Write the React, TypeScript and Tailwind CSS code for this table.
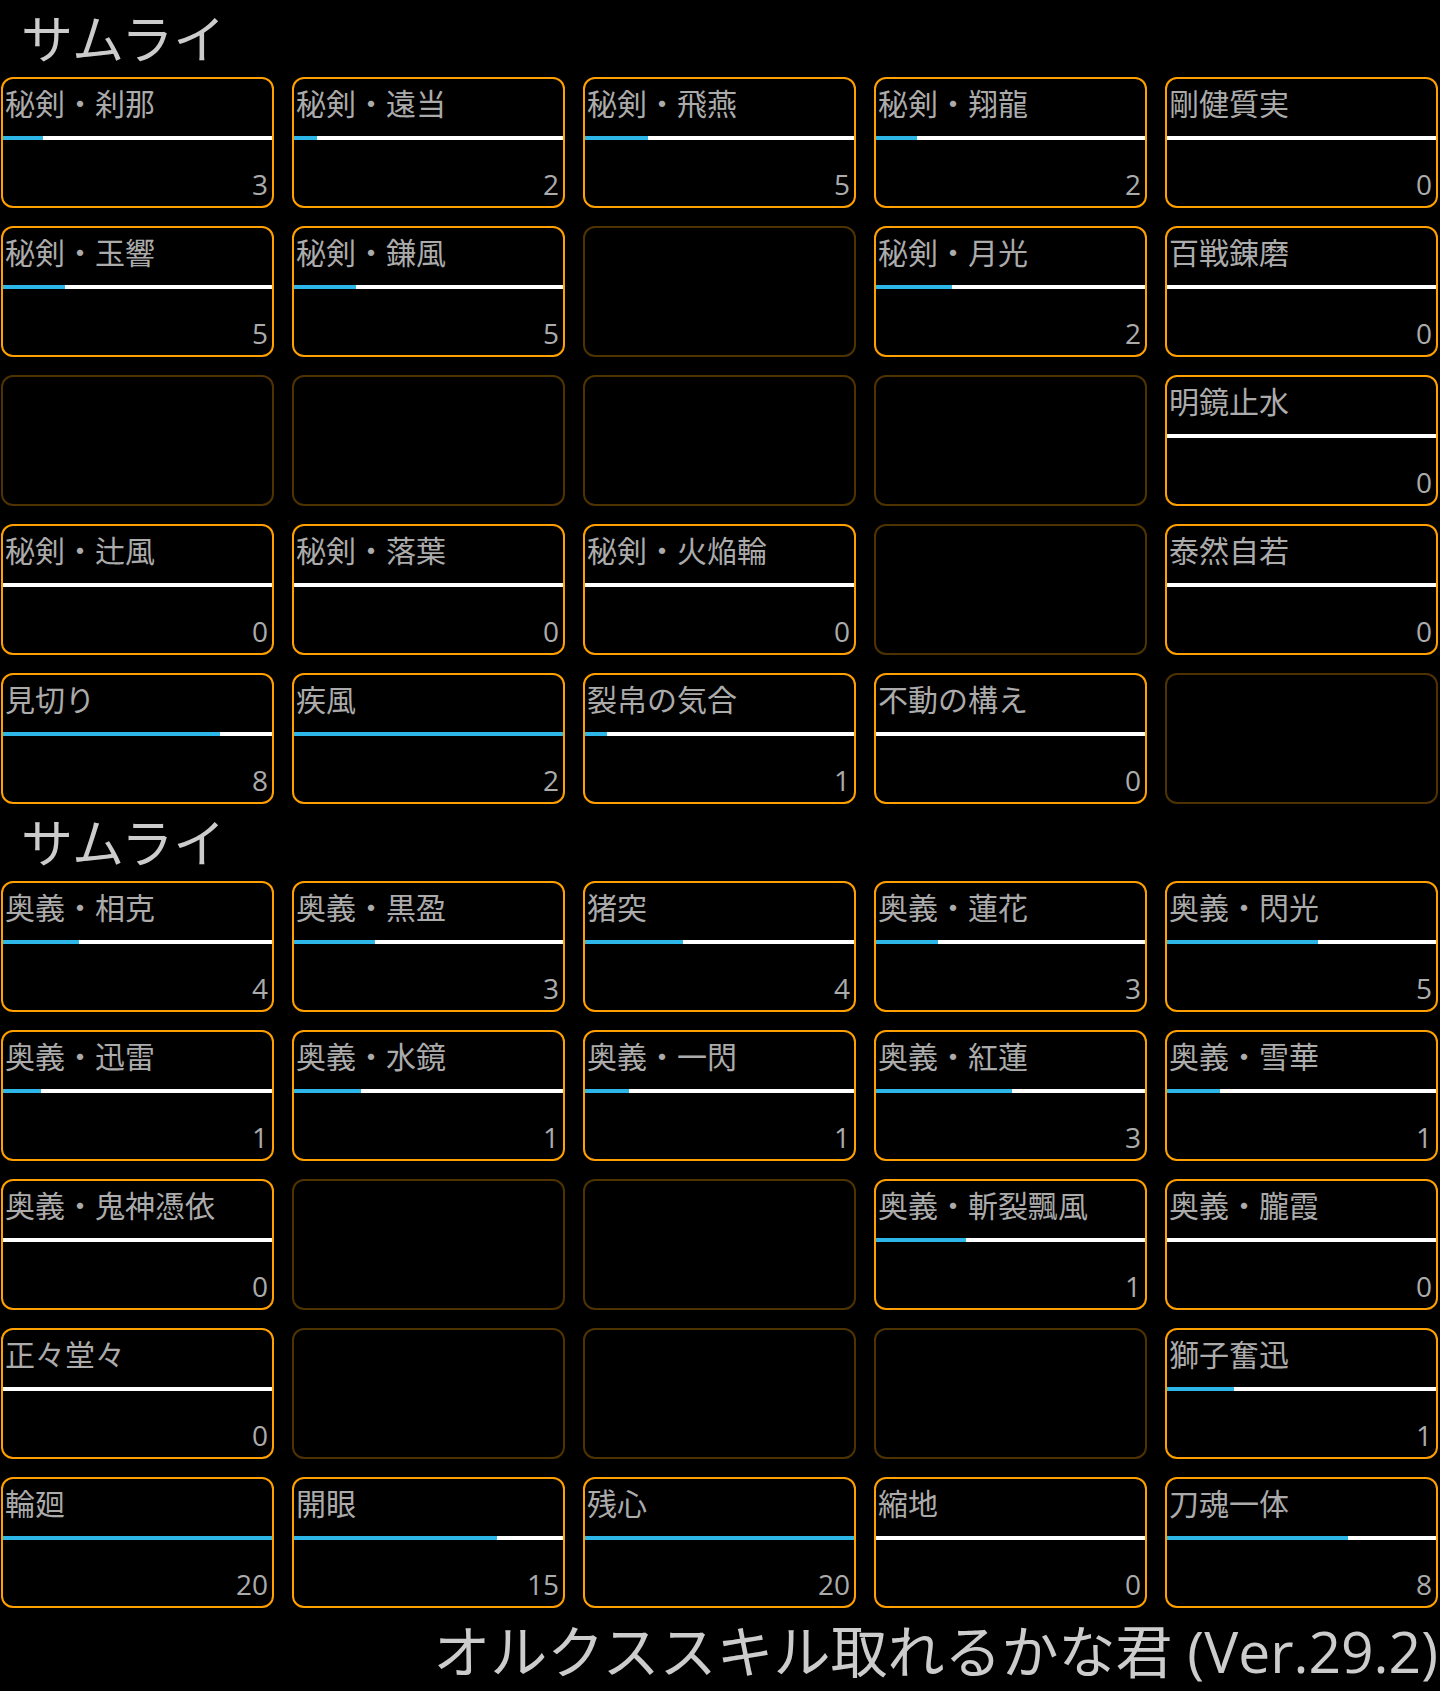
import React from "react";

type Skill = { name: string; value: number; fill: number } | null;

const font = { fontFamily: '"Open Sans", "Noto Sans CJK JP", sans-serif' };

const section1: Skill[] = [
  { name: "秘剣・刹那", value: 3, fill: 0.147 },
  { name: "秘剣・遠当", value: 2, fill: 0.084 },
  { name: "秘剣・飛燕", value: 5, fill: 0.236 },
  { name: "秘剣・翔龍", value: 2, fill: 0.152 },
  { name: "剛健質実", value: 0, fill: 0 },
  { name: "秘剣・玉響", value: 5, fill: 0.232 },
  { name: "秘剣・鎌風", value: 5, fill: 0.232 },
  null,
  { name: "秘剣・月光", value: 2, fill: 0.284 },
  { name: "百戦錬磨", value: 0, fill: 0 },
  null,
  null,
  null,
  null,
  { name: "明鏡止水", value: 0, fill: 0 },
  { name: "秘剣・辻風", value: 0, fill: 0 },
  { name: "秘剣・落葉", value: 0, fill: 0 },
  { name: "秘剣・火焔輪", value: 0, fill: 0 },
  null,
  { name: "泰然自若", value: 0, fill: 0 },
  { name: "見切り", value: 8, fill: 0.805 },
  { name: "疾風", value: 2, fill: 1 },
  { name: "裂帛の気合", value: 1, fill: 0.08 },
  { name: "不動の構え", value: 0, fill: 0 },
  null,
];

const section2: Skill[] = [
  { name: "奥義・相克", value: 4, fill: 0.284 },
  { name: "奥義・黒盈", value: 3, fill: 0.3 },
  { name: "猪突", value: 4, fill: 0.364 },
  { name: "奥義・蓮花", value: 3, fill: 0.232 },
  { name: "奥義・閃光", value: 5, fill: 0.56 },
  { name: "奥義・迅雷", value: 1, fill: 0.14 },
  { name: "奥義・水鏡", value: 1, fill: 0.248 },
  { name: "奥義・一閃", value: 1, fill: 0.164 },
  { name: "奥義・紅蓮", value: 3, fill: 0.504 },
  { name: "奥義・雪華", value: 1, fill: 0.196 },
  { name: "奥義・鬼神憑依", value: 0, fill: 0 },
  null,
  null,
  { name: "奥義・斬裂飄風", value: 1, fill: 0.336 },
  { name: "奥義・朧霞", value: 0, fill: 0 },
  { name: "正々堂々", value: 0, fill: 0 },
  null,
  null,
  null,
  { name: "獅子奮迅", value: 1, fill: 0.248 },
  { name: "輪廻", value: 20, fill: 1 },
  { name: "開眼", value: 15, fill: 0.756 },
  { name: "残心", value: 20, fill: 1 },
  { name: "縮地", value: 0, fill: 0 },
  { name: "刀魂一体", value: 8, fill: 0.674 },
];

function SkillCard({ skill }: { skill: Skill }) {
  if (!skill) {
    return <div className="h-[131px] rounded-[12px] border-2 border-[#4e3200]" />;
  }
  return (
    <div className="flex h-[131px] flex-col rounded-[12px] border-2 border-[#ffa000] overflow-hidden">
      <div className="h-[57px] pl-[2px] pt-[10px] text-[30px] leading-[30px] text-[#ababab] whitespace-nowrap">
        {skill.name}
      </div>
      <div className="h-[4px] bg-white">
        <div className="h-full bg-[#2db6e8]" style={{ width: `${skill.fill * 100}%` }} />
      </div>
      <div className="flex flex-1 items-end justify-end pr-[4px] pb-[8px] text-[28px] leading-[28px] text-[#ababab]">
        {skill.value}
      </div>
    </div>
  );
}

function Section({ title, skills }: { title: string; skills: Skill[] }) {
  return (
    <div>
      <div className="flex h-[77px] items-center pl-[21px] text-[52px] leading-none text-[#cccccc]">
        {title}
      </div>
      <div className="grid grid-cols-[repeat(5,273px)] gap-[18px] pl-[1px]">
        {skills.map((s, i) => (
          <SkillCard key={i} skill={s} />
        ))}
      </div>
    </div>
  );
}

export default function App() {
  return (
    <div className="min-h-[1691px] w-[1440px] bg-black" style={font}>
      <Section title="サムライ" skills={section1} />
      <Section title="サムライ" skills={section2} />
      <div className="flex h-[83px] items-center justify-end pr-[2px] pt-[4px] text-[57px] leading-none text-[#cccccc] whitespace-nowrap">
        オルクススキル取れるかな君 (Ver.29.2)
      </div>
    </div>
  );
}
